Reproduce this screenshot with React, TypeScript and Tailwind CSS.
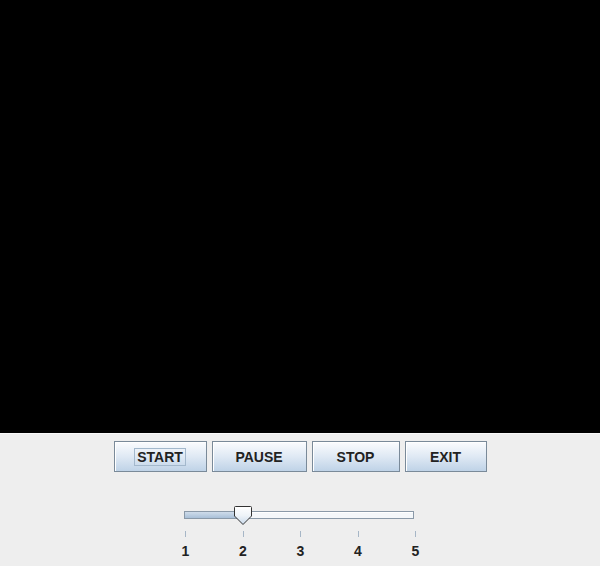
import React from 'react';

const buttons = [
  { label: 'START', width: 'w-[93px]', focused: true },
  { label: 'PAUSE', width: 'w-[95px]', focused: false },
  { label: 'STOP', width: 'w-[88px]', focused: false },
  { label: 'EXIT', width: 'w-[82px]', focused: false },
];

const ticks = [1, 2, 3, 4, 5];

const MetalButton: React.FC<{ label: string; width: string; focused: boolean }> = ({ label, width, focused }) => (
  <button
    className={`${width} h-[31px] border border-[#7a8a99] bg-gradient-to-b from-[#fbfcfe] via-[#dfe9f4] to-[#bfd3e7] shadow-[inset_1px_1px_0_#ffffff] flex items-center justify-center`}
  >
    <span
      className={`text-[14px] font-bold text-[#222] leading-[16px] px-[2px] mt-px ${
        focused ? 'outline outline-1 outline-[#a3b8cc]' : ''
      }`}
    >
      {label}
    </span>
  </button>
);

const Slider: React.FC = () => (
  <div className="w-[230px] flex flex-col">
    <div className="relative h-[20px] mt-px">
      {/* track */}
      <div className="absolute left-0 top-[5px] w-[230px] h-[8px] border border-[#8a99a8] bg-[#f4f7fa] shadow-[inset_1px_1px_0_#ffffff]">
        <div className="w-[58px] h-full bg-gradient-to-b from-[#cfdcea] to-[#a9c0d8]" />
      </div>
      {/* thumb */}
      <svg className="absolute left-[50px] top-0" width="18" height="19" viewBox="0 0 18 19">
        <defs>
          <linearGradient id="th" x1="0" y1="0" x2="0" y2="1">
            <stop offset="0" stopColor="#ffffff" />
            <stop offset="0.5" stopColor="#eef3f8" />
            <stop offset="1" stopColor="#c9d9ea" />
          </linearGradient>
        </defs>
        <path d="M0.5 1.5 Q0.5 0.5 1.5 0.5 H16.5 Q17.5 0.5 17.5 1.5 V10 L9 18.5 L0.5 10 Z" fill="url(#th)" stroke="#333" />
        <path d="M2 2 H16" stroke="#ffffff" />
      </svg>
    </div>
    <div className="flex justify-between mt-[5px] pl-px -mr-[2px]">
      {ticks.map(t => (
        <div key={t} className="w-px flex flex-col items-center">
          <div className="w-px h-[6px] bg-[#a6b6c6]" />
          <span className="mt-[6px] text-[14px] font-bold leading-[16px] text-[#222]">{t}</span>
        </div>
      ))}
    </div>
  </div>
);

const App: React.FC = () => {
  return (
    <div className="w-[600px] h-[566px] flex flex-col bg-[#eeeeee] overflow-hidden" style={{ fontFamily: '"Liberation Sans", Arial, sans-serif' }}>
      <div className="h-[433px] bg-black" />
      <div className="h-px bg-[#f9f9f9]" />
      <div className="flex justify-center gap-[5px] pt-[7px]">
        {buttons.map(b => (
          <MetalButton key={b.label} {...b} />
        ))}
      </div>
      <div className="flex justify-start pt-[33px] pl-[184px]">
        <Slider />
      </div>
    </div>
  );
};

export default App;
